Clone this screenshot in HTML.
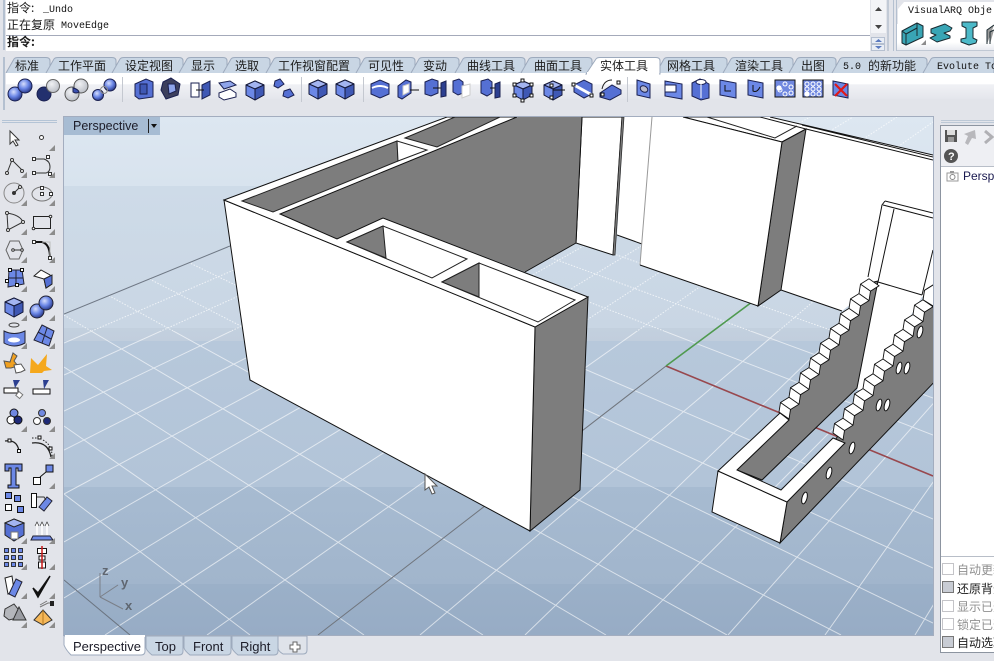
<!DOCTYPE html>
<html><head><meta charset="utf-8"><title>Rhino</title>
<style>
html,body{margin:0;padding:0;background:#e2e4ea;width:994px;height:661px;overflow:hidden}
svg{display:block}
.cj{font-family:"Liberation Mono","WenQuanYi Zen Hei","Noto Sans CJK SC",monospace;font-size:10px;fill:#111}
.cn{font-family:"WenQuanYi Zen Hei","Noto Sans CJK SC",sans-serif;font-size:12px;fill:#1c1c1c}
.ls{font-family:"Liberation Sans",sans-serif;font-size:13px;fill:#1c1c28}
</style></head><body>
<svg width="994" height="661" viewBox="0 0 994 661" xmlns="http://www.w3.org/2000/svg">
<defs>
<linearGradient id="bg" x1="0" y1="117" x2="0" y2="635" gradientUnits="userSpaceOnUse">
<stop offset="0" stop-color="#dde7f1"/><stop offset=".1333" stop-color="#d8e3ee"/>
<stop offset=".1333" stop-color="#cedbe8"/><stop offset=".4073" stop-color="#c9d6e4"/>
<stop offset=".4073" stop-color="#c3d0de"/><stop offset=".4324" stop-color="#c1cedd"/>
<stop offset=".4324" stop-color="#b7c8db"/><stop offset=".7143" stop-color="#b2c4d8"/>
<stop offset=".7143" stop-color="#a7bbd1"/><stop offset=".9015" stop-color="#a1b5cc"/>
<stop offset=".9015" stop-color="#9bb0c8"/><stop offset="1" stop-color="#97acc5"/>
</linearGradient>
<linearGradient id="tb" x1="0" y1="0" x2="0" y2="1"><stop offset="0" stop-color="#fff"/><stop offset=".42" stop-color="#fff"/><stop offset=".45" stop-color="#f0f1f5"/><stop offset="1" stop-color="#e4e6ec"/></linearGradient>
<linearGradient id="tt" x1="0" y1="0" x2="0" y2="1"><stop offset="0" stop-color="#fff"/><stop offset=".7" stop-color="#fff"/><stop offset="1" stop-color="#e8eaf0"/></linearGradient>
<radialGradient id="sp" cx=".4" cy=".35" r=".7"><stop offset="0" stop-color="#d6defc"/><stop offset=".5" stop-color="#6a86e6"/><stop offset="1" stop-color="#22307e"/></radialGradient>
<radialGradient id="sg" cx=".4" cy=".35" r=".7"><stop offset="0" stop-color="#f0f1f4"/><stop offset="1" stop-color="#b8bcc4"/></radialGradient>
<clipPath id="vp"><rect x="64" y="117" width="869" height="518"/></clipPath>
<clipPath id="gu"><polygon points="64,314 640,78 994,78 994,331 64,331"/></clipPath>
<clipPath id="gd"><rect x="64" y="331" width="869" height="304"/></clipPath>
<path id="gl" fill="none" d="M64 343L590 117M64 375L634 117M64 411L679 117M64 450L723 117M64 494L767 117M64 542L810 117M64 598L853 117M105 635L897 117M207 635L940 117M420 635L1031 117M525 635L994 181M628 635L994 267M728 635L994 335M825 635L994 396M915 635L994 505M64 494L250 635M64 426L364 635M64 367L483 635M64 315L606 635M64 271L727 635M64 235L841 635M64 202L933 623M64 172L933 568M64 145L933 519M64 99L933 435M64 79L933 398M64 61L933 366M64 44L933 335M64 29L933 307M64 15L933 282"/>
<g id="c" stroke="#15193a" stroke-width="1" stroke-linejoin="round"><polygon points="0,-9 9,-5 9,5 0,10 -9,5 -9,-5" fill="#5570d4"/><polygon points="-9,-5 0,-9 9,-5 0,-1" fill="#a3b4f0"/><polygon points="0,-1 9,-5 9,5 0,10" fill="#3f58b4"/><polygon points="0,-1 -9,-5 -9,5 0,10" fill="#6c88e6"/></g>
<polygon id="t" points="0,6 6,0 6,6" fill="#8c8c8c"/>
<g id="st">
<polygon fill="#fff" stroke="#111" stroke-width=".9" points="779,412 780.5,402.5 789,397.2 790.5,387.7 799,382.4 800.5,372.9 809,367.6 810.5,358.1 819,352.8 820.5,343.3 829,338 830.5,328.5 839,323.2 840.5,313.7 849,308.4 850.5,298.9 859,293.6 860.5,284.1 869,278.8 879,285.8 870.5,291.1 869,300.6 860.5,305.9 859,315.4 850.5,320.7 849,330.2 840.5,335.5 839,345 830.5,350.3 829,359.8 820.5,365.1 819,374.6 810.5,379.9 809,389.4 800.5,394.7 799,404.2 790.5,409.5 789,419"/>
<path fill="none" stroke="#111" stroke-width=".9" d="M780.5 402.5L790.5 409.5M789 397.2L799 404.2M790.5 387.7L800.5 394.7M799 382.4L809 389.4M800.5 372.9L810.5 379.9M809 367.6L819 374.6M810.5 358.1L820.5 365.1M819 352.8L829 359.8M820.5 343.3L830.5 350.3M829 338L839 345M830.5 328.5L840.5 335.5M839 323.2L849 330.2M840.5 313.7L850.5 320.7M849 308.4L859 315.4M850.5 298.9L860.5 305.9M859 293.6L869 300.6M860.5 284.1L870.5 291.1"/>
</g>
</defs>

<rect width="994" height="661" fill="#e2e4ea"/>

<!-- viewport -->
<rect x="63.500" y="116.500" width="870" height="519" fill="url(#bg)" stroke="#a3adbf"/>
<g clip-path="url(#vp)">
<g clip-path="url(#gu)"><use href="#gl" stroke="#fff" stroke-opacity=".7" stroke-width="1" stroke-dasharray="1.500 1.500"/></g>
<g clip-path="url(#gd)"><use href="#gl" stroke="#fff" stroke-opacity=".6" stroke-width="1"/></g>
<path d="M64 580L130 635" stroke="#6b7480" stroke-width="1"/>
<path d="M64 314L230 246" stroke="#6f7885" stroke-width="1"/>
<path d="M666 366L318 635" stroke="#70757d" stroke-width="1" fill="none"/>
<path d="M666 366L933 476" stroke="#98484e" stroke-width="1.600" fill="none"/>
<path d="M666 366L752 302" stroke="#4f9a4f" stroke-width="1.600" fill="none"/>

<!-- rear wall -->
<polygon points="757,117 770,117 940,157 940,320 922,296 878,282 842,311 781,290 806,129" fill="#fff"/>
<path d="M770 117L933 155M802 125L933 157M806 129L933 160M781 290L842 311" stroke="#111" fill="none"/>

<!-- block 1 and behind -->
<polygon points="624,117 652,117 642,244 617,235" fill="#fff"/>
<path d="M617 235L642 244" stroke="#111"/>
<polygon points="582,117 622,117 613,255 576,243" fill="#fff" stroke="#111"/>
<polygon points="622,117 624,117 615,255 613,255" fill="#7d7d7d" stroke="#222" stroke-width=".7"/>

<!-- main block -->
<polygon points="683,117 760,117 806,129 782,142" fill="#fff" stroke="#111"/>
<path d="M707 117L775 138L797 126M692 117L707 117" stroke="#222" fill="none"/>
<polygon points="782,142 806,129 781,290 758,306" fill="#7d7d7d" stroke="#111"/>
<polygon points="652,117 683,117 782,142 758,306 640,265" fill="#fff"/>
<path d="M652 117L640 265" stroke="#999"/>
<path d="M683 117L782 142L758 306L640 265" stroke="#111" fill="none"/>

<!-- front structure -->
<polygon points="280,214 518,117 582,117 576,243 525,272 383,218 337,239" fill="#7d7d7d"/>
<path d="M582 117L576 243L525 272" stroke="#111" fill="none"/>
<polygon points="535,327 588,297 580,490 530,531" fill="#7d7d7d" stroke="#111"/>
<polygon points="224,200 535,327 530,531 250,380" fill="#fff" stroke="#111"/>
<polygon points="224,200 447,117 517,117 280,214 337,239 383,218 588,297 535,327" fill="#fff" stroke="#111"/>
<polygon points="242,201 397,141 398,161 273,212" fill="#7d7d7d" stroke="#222"/>
<polygon points="397,141 427,150 398,161" fill="#fff" stroke="#222"/>
<polygon points="405,138 455,117 500,117 437,147" fill="#7d7d7d" stroke="#222"/>
<polygon points="347,242 383,226 467,259 432,278" fill="#fff" stroke="#222"/>
<polygon points="347,242 383,226 386,258" fill="#7d7d7d" stroke="#222"/>
<polygon points="442,282 479,263 575,300 538,322" fill="#fff" stroke="#222"/>
<polygon points="442,282 479,263 479,297" fill="#7d7d7d" stroke="#222"/>

<!-- tall panel behind stairs -->
<polygon points="878,281 923,295 866,390 857,390" fill="#fff"/>
<path d="M885 201L933 213M883 205L933 218M885 201L882 205L868 277M894 209L878 282L922 295M933 250L922 295" stroke="#111" fill="none"/>

<!-- stairs -->
<polygon points="737,470 762,480 857,388 878,281 874,282 785,416" fill="#7d7d7d" stroke="#111"/>
<polygon points="787,502 780,543 940,376 940,290 838,436" fill="#7d7d7d" stroke="#111"/>
<polygon points="718,471 787,502 780,543 712,512" fill="#fff" stroke="#111"/>
<polygon points="718,471 780,413 789,420 737,470 781,490 833,438 845,443 787,502" fill="#fff" stroke="#111"/>
<use href="#st"/>
<use href="#st" transform="translate(54,21)"/>
<polygon points="923,299.800 924.500,290.300 933,285 943,292 933,306" fill="#fff" stroke="#111"/>
<g fill="#fff" stroke="#111">
<ellipse cx="804.500" cy="498" rx="2.500" ry="6" transform="rotate(15 804.500 498)"/>
<ellipse cx="829" cy="473" rx="2.500" ry="6" transform="rotate(15 829 473)"/>
<ellipse cx="852" cy="448" rx="2.500" ry="6" transform="rotate(15 852 448)"/>
<ellipse cx="879" cy="405" rx="2.500" ry="6" transform="rotate(15 879 405)"/>
<ellipse cx="887" cy="405" rx="2.500" ry="6" transform="rotate(15 887 405)"/>
<ellipse cx="899" cy="368" rx="2.500" ry="6" transform="rotate(15 899 368)"/>
<ellipse cx="907" cy="368" rx="2.500" ry="6" transform="rotate(15 907 368)"/>
<ellipse cx="920" cy="332" rx="2.500" ry="6" transform="rotate(15 920 332)"/>
</g>

<!-- cursor -->
<polygon points="425,474 425,490 429,487 432,494 435,493 432,486 437,486" fill="#fff" stroke="#555" stroke-width="1"/>

<!-- world axes -->
<path d="M100 597V573M100 597L118 585M100 597L123 609" stroke="#7a7f88" fill="none"/>
<g font-family="Liberation Sans,sans-serif" font-size="13" font-weight="bold" fill="#5f6670"><text x="102" y="575">z</text><text x="121" y="587">y</text><text x="125" y="610">x</text></g>

<!-- viewport title -->
<rect x="64" y="117" width="96" height="18" fill="#a7bcd3"/>
<text x="73" y="130" class="ls" style="font-size:12.500px">Perspective</text>
<path d="M148.500 119V133" stroke="#222"/><polygon points="151,124 157,124 154,128" fill="#111"/>
</g>

<!-- TOP -->
<rect x="0" y="0" width="994" height="56" fill="#e2e4ea"/>
<rect x="6" y="0" width="864" height="51" fill="#fff"/>
<path d="M6 35.500H870" stroke="#a4aaba"/>
<rect x="3" y="0" width="2" height="50" fill="#b4c0d0"/>
<rect x="3" y="57" width="2" height="53" fill="#b4c0d0"/>
<text x="7" y="12" class="cn">指令:</text><text x="43" y="12" class="cj">_Undo</text>
<text x="7" y="29" class="cn">正在复原</text><text x="61" y="28" class="cj">MoveEdge</text>
<text x="7" y="46" class="cn" style="font-weight:bold">指令:</text>

<!-- scrollbar -->
<rect x="871" y="0" width="15" height="33" fill="#f3f4f7"/>
<polygon points="875,11 882,11 878.500,7" fill="#444"/><polygon points="875,25 882,25 878.500,29" fill="#444"/>
<rect x="871.500" y="37.500" width="13" height="6" fill="#e8edf5" stroke="#b6c0d0"/><rect x="871.500" y="44.500" width="13" height="6" fill="#e8edf5" stroke="#b6c0d0"/>
<polygon points="875,42 882,42 878.500,39" fill="#5a7ac0"/><polygon points="875,46 882,46 878.500,49" fill="#5a7ac0"/>
<rect x="887" y="0" width="2" height="51" fill="#c2cad6"/><rect x="893" y="0" width="1" height="51" fill="#b4c0d0"/><rect x="896" y="0" width="1" height="51" fill="#b4c0d0"/>

<!-- VisualARQ panel -->
<path d="M898 24V9L904 2H994V24Z" fill="#fff"/>
<rect x="897" y="24" width="97" height="26" fill="url(#tt)"/>
<path d="M897 50.500H994" stroke="#c0c8d4"/>
<text x="908" y="13" class="cj" style="font-size:10px">VisualARQ Obje</text>
<g stroke="#1a2a30" stroke-linejoin="round">
<polygon points="902,31 917,23 923,26 923,37 906,45 902,43" fill="#39a5b5"/>
<path d="M917 23V36M906 34V45M902 31L906 34L917 28" fill="none"/>
<polygon points="931,29 945,24 952,28 950,31 944,33 950,36 950,38 937,42 930,38 936,35 931,33" fill="#39a5b5"/>
<polygon points="962,22 977,22 977,26 973,28 973,38 977,40 976,43 969,45 961,42 961,39 966,38 966,28 962,26" fill="#4cb9c8"/>
<path d="M987 44V30L994 25M990 44V32L994 30" fill="#9c9c9c"/>
</g>
<polygon points="921,45 926,40 926,45" fill="#8c8c8c"/>

<!-- tab strip -->
<g stroke="#9daabd" fill="#c9d6e4">
<path d="M6 73L14 59Q15 57.500 18 57.500H46Q50 57.500 50 61V73"/>
<path d="M46 73L54 59Q55 57.500 58 57.500H112Q116 57.500 116 61V73"/>
<path d="M112 73L120 59Q121 57.500 124 57.500H179Q183 57.500 183 61V73"/>
<path d="M179 73L187 59Q188 57.500 191 57.500H223Q227 57.500 227 61V73"/>
<path d="M223 73L231 59Q232 57.500 235 57.500H266Q270 57.500 270 61V73"/>
<path d="M266 73L274 59Q275 57.500 278 57.500H356Q360 57.500 360 61V73"/>
<path d="M356 73L364 59Q365 57.500 368 57.500H411Q415 57.500 415 61V73"/>
<path d="M411 73L419 59Q420 57.500 423 57.500H455Q459 57.500 459 61V73"/>
<path d="M455 73L463 59Q464 57.500 467 57.500H521Q525 57.500 525 61V73"/>
<path d="M521 73L529 59Q530 57.500 533 57.500H588Q592 57.500 592 61V73"/>
<path d="M656 73L664 59Q665 57.500 668 57.500H723Q727 57.500 727 61V73"/>
<path d="M723 73L731 59Q732 57.500 735 57.500H789Q793 57.500 793 61V73"/>
<path d="M789 73L797 59Q798 57.500 801 57.500H832Q836 57.500 836 61V73"/>
<path d="M832 73L840 59Q841 57.500 844 57.500H923Q927 57.500 927 61V73"/>
<path d="M923 73L931 59Q932 57.500 935 57.500H994V73"/>
</g>
<rect x="6" y="73" width="988" height="26" fill="url(#tb)"/>
<path d="M586 74L596 59Q597 57.500 600 57.500H656Q660 57.500 660 61V74Z" fill="#fff" stroke="#9daabd"/>
<rect x="587" y="72" width="72" height="4" fill="#fff"/>
<text x="15" y="70" class="cn">标准</text><text x="58" y="70" class="cn">工作平面</text><text x="125" y="70" class="cn">设定视图</text><text x="191" y="70" class="cn">显示</text><text x="235" y="70" class="cn">选取</text><text x="278" y="70" class="cn">工作视窗配置</text><text x="368" y="70" class="cn">可见性</text><text x="423" y="70" class="cn">变动</text><text x="467" y="70" class="cn">曲线工具</text><text x="534" y="70" class="cn">曲面工具</text><text x="600" y="70" class="cn">实体工具</text><text x="667" y="70" class="cn">网格工具</text><text x="735" y="70" class="cn">渲染工具</text><text x="801" y="70" class="cn">出图</text>
<text x="843" y="69" class="cj">5.0</text><text x="868" y="70" class="cn">的新功能</text>
<text x="937" y="69" class="cj">Evolute Tool</text>

<!-- separators -->
<path d="M122.500 77V102M301.500 77V102M363.500 77V102M627.500 77V102" stroke="#c4c8d0"/>

<!-- main toolbar icons -->
<g stroke="#1a2050" stroke-width="1">
<circle cx="15" cy="94" r="7" fill="url(#sp)"/><circle cx="25" cy="86" r="7" fill="url(#sp)"/>
<circle cx="44" cy="94" r="7" fill="#23306e"/><circle cx="53" cy="86" r="6.500" fill="url(#sg)" stroke="#666"/>
<circle cx="72" cy="94" r="7" fill="url(#sg)" stroke="#555"/><circle cx="81" cy="86" r="7" fill="url(#sg)" stroke="#555"/><path d="M73 88Q78 89 79 92Q76 94 73 92Z" fill="#3a50b0"/>
<circle cx="98" cy="95" r="5.500" fill="url(#sp)"/><circle cx="110" cy="85" r="6" fill="url(#sp)"/><circle cx="104" cy="90" r="3.500" fill="none" stroke="#888"/>
<polygon points="135,84 146,79 153,82 153,97 139,99 135,96" fill="#5570d4"/><rect x="140" y="84" width="7" height="10" fill="#3f58b4"/>
<polygon points="171,78 180,84 178,95 166,99 161,90 163,82" fill="#3c3f5c"/><polygon points="168,84 175,84 176,91 169,94" fill="#8ea4ea"/>
<rect x="191" y="83" width="8" height="14" fill="#fff"/><polygon points="202,85 210,81 210,95 202,99" fill="#3f58b4"/><path d="M196 90H204" stroke="#111"/>
<polygon points="219,83 230,81 236,85 224,89" fill="#8ea4ea"/><polygon points="219,93 230,89 236,93 236,97 224,100 219,97" fill="#fff"/>
</g>
<use href="#c" transform="translate(255,90)"/>
<g fill="#5570d4" stroke="#1a2050"><polygon points="275,81 280,79 284,84 278,88 274,86"/><polygon points="284,91 290,89 294,95 288,98 283,96"/></g>
<use href="#c" transform="translate(318,89)"/><use href="#c" transform="translate(345,89)"/>
<g stroke="#1a2050">
<polygon points="371,84 380,80 389,84 389,94 380,98 371,94" fill="#5570d4"/><path d="M372 88Q380 84 388 88" stroke="#fff" stroke-width="2" fill="none"/>
<polygon points="398,86 406,80 411,82 411,93 402,99 398,97" fill="#5570d4"/><polygon points="403,86 409,84 409,92 403,95" fill="#fff" stroke="#ccc"/><path d="M410 90H419" stroke="#111"/>
<polygon points="425,82 432,79 438,81 438,93 431,96 425,94" fill="#5570d4"/><path d="M433 88H441" stroke="#111"/><polygon points="441,83 446,81 446,96 441,97" fill="#2c3f90"/>
<polygon points="453,81 459,79 463,82 463,93 458,95 453,92" fill="#5570d4"/><polygon points="462,86 470,84 470,95 462,98" fill="#fff" stroke="#ccc"/>
<polygon points="481,81 488,79 492,82 492,93 487,96 481,93" fill="#5570d4"/><path d="M490 88H498" stroke="#111"/><polygon points="495,84 500,82 500,97 495,98" fill="#2c3f90"/>
</g>
<g transform="translate(523,90)"><use href="#c"/><g fill="#fff" stroke="#111"><rect x="-10" y="-7" width="3" height="3"/><rect x="-2" y="-11" width="3" height="3"/><rect x="7" y="-7" width="3" height="3"/><rect x="7" y="4" width="3" height="3"/><rect x="-2" y="9" width="3" height="3"/><rect x="-10" y="4" width="3" height="3"/></g></g>
<g transform="translate(553,90)"><use href="#c"/><g fill="#fff" stroke="#111"><rect x="-3" y="-6" width="3" height="3"/><rect x="-3" y="6" width="3" height="3"/></g><path d="M0 0H12" stroke="#111"/></g>
<g stroke="#1a2050"><polygon points="574,85 584,80 592,84 592,94 584,98 574,92" fill="#5570d4"/><path d="M574 85L592 95" stroke="#fff" stroke-width="3"/></g>
<g fill="#fff" stroke="#111"><rect x="572" y="83" width="3" height="3"/><rect x="590" y="94" width="3" height="3"/></g>
<g stroke="#1a2050"><polygon points="600,93 612,85 621,90 621,94 610,100 600,97" fill="#5570d4"/><path d="M602 89Q604 80 612 80" fill="none" stroke="#222"/></g>
<g fill="#fff" stroke="#111"><rect x="601" y="93" width="3" height="3"/><rect x="617" y="81" width="3" height="3"/></g>
<g stroke="#1a2050">
<polygon points="637,80 650,84 650,98 637,95" fill="#6c88e6"/><ellipse cx="644" cy="89" rx="4" ry="3" fill="#bbc" transform="rotate(30 644 89)"/>
<polygon points="665,81 682,84 682,99 665,96" fill="#6c88e6"/><rect x="665" y="85" width="11" height="7" fill="#fff"/>
<polygon points="692,83 700,79 709,84 709,98 701,100 692,96" fill="#5570d4"/><ellipse cx="701" cy="82" rx="5" ry="2.500" fill="#fff"/><path d="M701 84V98" stroke="#fff"/>
<polygon points="720,80 736,83 736,98 720,95" fill="#6c88e6"/><path d="M725 85V91H731" stroke="#111" fill="none"/>
<polygon points="748,80 763,83 763,98 748,95" fill="#6c88e6"/><path d="M753 85V91Q757 93 760 87" stroke="#111" fill="none"/>
</g>
<g stroke="#111"><rect x="775" y="80" width="20" height="17" fill="#7088e0"/><rect x="803" y="80" width="20" height="17" fill="#7088e0"/></g>
<g fill="#7088e0" stroke="#fff"><circle cx="780" cy="90" r="2"/><circle cx="785" cy="84" r="2"/><circle cx="791" cy="87" r="2"/><circle cx="791" cy="93" r="2"/><circle cx="785" cy="94" r="2"/></g>
<circle cx="779" cy="88" r="2.600" fill="#fff"/>
<g fill="#7088e0" stroke="#fff"><circle cx="807" cy="84" r="2"/><circle cx="813" cy="84" r="2"/><circle cx="819" cy="84" r="2"/><circle cx="807" cy="89" r="2"/><circle cx="813" cy="89" r="2"/><circle cx="819" cy="89" r="2"/><circle cx="813" cy="94" r="2"/><circle cx="819" cy="94" r="2"/></g>
<circle cx="807" cy="94" r="2.600" fill="#fff"/>
<polygon points="833,81 848,84 848,98 833,95" fill="#6c88e6" stroke="#1a2050"/>
<path d="M835 84L847 96M847 84L835 96" stroke="#e01818" stroke-width="2.200"/>

<!-- left toolbar -->
<path d="M2 120.500H57M2 122.500H57" stroke="#b4c4d6"/>
<g fill="none" stroke="#333" stroke-width="1">
<polygon points="10,131 10,144 13,141 16,146 18,145 15,140 19,140" fill="#fff"/>
<circle cx="41.500" cy="137.500" r="2" fill="#fff"/>
<path d="M7 173L12 160L22 170"/><circle cx="7" cy="173" r="1.500" fill="#fff"/><circle cx="12" cy="160" r="1.500" fill="#fff"/><circle cx="22" cy="171" r="1.500" fill="#fff"/>
<path d="M35 159H44Q50 161 50 167Q50 172 46 173H35"/><rect x="32.500" y="157.500" width="3" height="3" fill="#fff"/><rect x="46.500" y="155.500" width="3" height="3" fill="#fff"/><rect x="32.500" y="171.500" width="3" height="3" fill="#fff"/><rect x="48.500" y="172.500" width="3" height="3" fill="#fff"/>
<circle cx="14" cy="193" r="10" stroke="#888"/><path d="M14 193L20 187"/><circle cx="14" cy="193" r="1.500" fill="#333"/><circle cx="20" cy="187" r="1.500" fill="#fff"/>
<ellipse cx="42" cy="194" rx="10" ry="7" stroke="#777"/><rect x="40.500" y="186.500" width="3" height="3" fill="#fff"/><rect x="40.500" y="192.500" width="3" height="3" fill="#fff"/><rect x="49.500" y="192.500" width="3" height="3" fill="#fff"/>
<path d="M7 213L8 230L23 222Q20 215 7 213"/><circle cx="7" cy="213" r="1.500" fill="#fff"/><circle cx="8" cy="230" r="1.500" fill="#fff"/><circle cx="23" cy="222" r="1.500" fill="#fff"/>
<rect x="33.500" y="216.500" width="17" height="12" stroke="#222"/><circle cx="33.500" cy="228.500" r="1.300" fill="#fff"/><circle cx="50.500" cy="216.500" r="1.300" fill="#fff"/>
<polygon points="10,241 19,241 23,250 19,259 10,259 6,250" stroke="#666"/><path d="M13 250H22"/><circle cx="13" cy="250" r="1.300" fill="#fff"/><circle cx="22" cy="250" r="1.300" fill="#fff"/>
<path d="M34 242H42Q50 244 50 258" stroke="#111" stroke-width="2"/><path d="M42 242H50V256" stroke="#bbb"/><rect x="32.500" y="240.500" width="3" height="3" fill="#fff"/><rect x="48.500" y="256.500" width="3" height="3" fill="#fff"/>
</g>
<polygon points="9,270 22,270 24,284 8,287" fill="#6c88e6" stroke="#223"/>
<path d="M16 270V286M8 278H23" stroke="#223"/>
<g fill="#fff" stroke="#111"><rect x="8.500" y="268.500" width="3" height="3"/><rect x="20.500" y="268.500" width="3" height="3"/><rect x="5.500" y="279.500" width="3" height="3"/><rect x="15.500" y="283.500" width="3" height="3"/></g>
<path d="M34 276L41 270L50 275L52 284L46 288L44 279Z" fill="#fff" stroke="#222"/><path d="M44 279L52 275L52 284L46 288Z" fill="#5570d4" stroke="#222"/>
<use href="#c" transform="translate(14,307)"/>
<circle cx="37" cy="311" r="7" fill="url(#sp)" stroke="#223"/><circle cx="46" cy="303" r="7" fill="url(#sp)" stroke="#223"/>
<ellipse cx="14" cy="325" rx="5" ry="2" fill="none" stroke="#444"/>
<path d="M4 331Q14 336 25 331V343Q14 349 4 343Z" fill="#6c88e6" stroke="#223"/><ellipse cx="14" cy="340" rx="6" ry="2.500" fill="#fff" stroke="none"/>
<polygon points="42,325 54,331 49,346 34,340" fill="#6c88e6" stroke="#223"/><path d="M38 332L51 339M47 328L42 343" stroke="#223"/>
<polygon points="4,361 10,362 13,353 17,356 14,361 18,366 11,368 6,368" fill="#f0a020" stroke="#555"/>
<polygon points="14,365 21,364 25,370 21,372 16,373" fill="#fff" stroke="#555"/>
<polygon points="30,373 31,358 38,365 47,354 46,366 52,370 44,371 42,373" fill="#f5a81c"/>
<g><rect x="4" y="388" width="14" height="5" fill="#fff" stroke="#111"/><polygon points="13,380 20,380 15,388" fill="#2c3f90"/><rect x="17" y="393" width="5" height="5" fill="#fff" stroke="#777" transform="rotate(40 20 395)"/><rect x="33" y="389" width="17" height="5" fill="#fff" stroke="#111"/><polygon points="43,380 49,380 44,389" fill="#2c3f90"/></g>
<g stroke="#111"><circle cx="14" cy="413" r="4" fill="#7088e0"/><circle cx="11" cy="420" r="4" fill="#fff"/><circle cx="18" cy="420" r="4" fill="#1e2a78"/></g>
<g stroke="#333"><circle cx="42" cy="413" r="3.500" fill="#7088e0"/><circle cx="37" cy="421" r="3.500" fill="#fff"/><circle cx="47" cy="421" r="3.500" fill="#1e2a78"/></g>
<path d="M5 441Q17 439 19 451" fill="none" stroke="#222" stroke-width="1.300"/><rect x="8" y="439" width="3" height="3" fill="#fff" stroke="#111"/><rect x="17.500" y="449.500" width="3" height="3" fill="#fff" stroke="#111"/>
<path d="M32 443Q48 441 51 457" fill="none" stroke="#222" stroke-width="1.300"/><path d="M32 438H40M43 440Q52 445 52 456" stroke="#222" stroke-dasharray="1.500 1.500" fill="none"/><rect x="38" y="436" width="3" height="3" fill="#fff" stroke="#111"/><rect x="49" y="447" width="3" height="3" fill="#fff" stroke="#111"/>
<path d="M5 464H22V471H18V468H16V485H19V488H8V485H11V468H9V471H5Z" fill="#6c88e6" stroke="#111"/>
<rect x="33.500" y="477.500" width="7" height="7" fill="#fff" stroke="#111"/><rect x="46" y="465" width="7" height="7" fill="#6c88e6" stroke="#111"/><path d="M40 477L46 472" stroke="#111"/>
<g stroke="#111"><rect x="5.500" y="492.500" width="6" height="6" fill="#6c88e6"/><rect x="14.500" y="495.500" width="6" height="6" fill="#6c88e6"/><rect x="5.500" y="504.500" width="6" height="6" fill="#fff"/><rect x="17.500" y="506.500" width="6" height="6" fill="#6c88e6"/></g>
<rect x="31.500" y="493.500" width="5" height="14" fill="#fff" stroke="#111"/><polygon points="47,497 52,501 44,511 39,507" fill="#6c88e6" stroke="#223"/><path d="M37 497H44L46 500" fill="none" stroke="#333"/>
<polygon points="14,519 24,523 24,535 14,541 5,535 5,523" fill="#5570d4" stroke="#222"/><polygon points="5,523 14,519 24,523 14,527" fill="#a3b4f0" stroke="#222"/><rect x="11" y="532" width="7" height="7" fill="#fff" stroke="#777"/>
<polygon points="33,536 50,536 53,540 31,540" fill="#6c88e6" stroke="#223"/><path d="M37 535V524M42 535V524M47 535V524" stroke="#fff" stroke-width="1.500"/><path d="M35 526L37 522L39 526M40 526L42 522L44 526M45 526L47 522L49 526" fill="#fff" stroke="#333" stroke-width=".7"/>
<g fill="#6c88e6" stroke="#111" stroke-width=".8"><rect x="4.500" y="548.500" width="4" height="4"/><rect x="11.500" y="548.500" width="4" height="4"/><rect x="18.500" y="548.500" width="4" height="4"/><rect x="4.500" y="555.500" width="4" height="4"/><rect x="11.500" y="555.500" width="4" height="4"/><rect x="18.500" y="555.500" width="4" height="4"/><rect x="4.500" y="562.500" width="4" height="4"/><rect x="11.500" y="562.500" width="4" height="4"/><rect x="18.500" y="562.500" width="4" height="4"/></g>
<g fill="#fff" stroke="#111"><rect x="37.500" y="548.500" width="9" height="5"/><rect x="39" y="556" width="6" height="4"/><rect x="38.500" y="562" width="7" height="6"/></g><path d="M42 546V569" stroke="#c81818" stroke-width="1.500"/>
<polygon points="5,578 12,576 14,590 8,594" fill="#fff" stroke="#222"/><polygon points="16,579 22,582 15,597 9,594" fill="#6c88e6" stroke="#223"/>
<path d="M33 588L38 593L50 576L38 597Z" fill="#111" stroke="#111" stroke-width="1.500"/>
<polygon points="5,609 14,604 18,609 17,618 9,620 4,616" fill="#b4b6bb" stroke="#333"/><polygon points="19,607 26,620 13,620" fill="#9a9ca2" stroke="#333"/>
<polygon points="43,610 52,620 43,625 34,620" fill="#f5b85a" stroke="#333"/><path d="M43 610V625" stroke="#b87a20"/>
<path d="M40 607L48 603H54M40 605L47 601" fill="none" stroke="#777"/><rect x="50" y="601" width="4" height="5" fill="#222"/>
<use href="#t" x="49" y="145"/><use href="#t" x="21" y="172"/><use href="#t" x="49" y="172"/><use href="#t" x="21" y="200"/><use href="#t" x="49" y="200"/><use href="#t" x="21" y="229"/><use href="#t" x="49" y="229"/><use href="#t" x="21" y="257"/><use href="#t" x="49" y="257"/><use href="#t" x="21" y="286"/><use href="#t" x="49" y="286"/><use href="#t" x="21" y="315"/><use href="#t" x="49" y="315"/><use href="#t" x="21" y="343"/><use href="#t" x="49" y="343"/>
<use href="#t" x="21" y="426"/><use href="#t" x="49" y="426"/><use href="#t" x="49" y="453"/><use href="#t" x="49" y="483"/><use href="#t" x="21" y="538"/><use href="#t" x="49" y="538"/><use href="#t" x="21" y="564"/><use href="#t" x="49" y="564"/><use href="#t" x="21" y="593"/><use href="#t" x="49" y="593"/><use href="#t" x="21" y="622"/><use href="#t" x="49" y="622"/>

<!-- bottom tabs -->
<g stroke="#9daabd" fill="#c9d6e4">
<path d="M278 636V648Q278 651 283 654H303Q307 654 307 650V636Z" fill="#dfe3ea"/>
<path d="M232 636V648Q233 651 238 655H274Q278 655 278 651V636Z"/>
<path d="M184 636V648Q185 651 190 655H227Q231 655 231 651V636Z"/>
<path d="M146 636V648Q147 651 152 655H179Q183 655 183 651V636Z"/>
<path d="M64 636V645Q66 650 71 655H141Q145 655 145 651V636Z" fill="#fff"/>
</g>
<rect x="65" y="635" width="80" height="2" fill="#fff"/>
<text x="73" y="651" class="ls">Perspective</text><text x="155" y="651" class="ls">Top</text><text x="193" y="651" class="ls">Front</text><text x="240" y="651" class="ls">Right</text>
<path d="M293 642H297V645H300V649H297V652H293V649H290V645H293Z" fill="#fff" stroke="#666"/>

<!-- right panel -->
<path d="M941 120.500H994M941 122.500H994" stroke="#bcc8d6"/>
<rect x="940.500" y="125.500" width="54" height="527" fill="#fff" stroke="#8c94a0"/>
<rect x="941" y="126" width="53" height="40" fill="#eeeff3"/>
<path d="M941 166.500H994" stroke="#b8bec8"/>
<rect x="945" y="130" width="12" height="12" fill="#555"/><rect x="947" y="130" width="8" height="5" fill="#ddd"/><rect x="948" y="137" width="6" height="5" fill="#999"/>
<polygon points="965,143 968,136 964,134 975,130 976,139 972,138 968,145" fill="#b8b8bc"/>
<path d="M985 131L992 137L985 143" fill="none" stroke="#b0b0b4" stroke-width="3"/>
<circle cx="951" cy="156" r="7" fill="#555"/>
<text x="948" y="160" font-family="Liberation Sans,sans-serif" font-size="11" font-weight="bold" fill="#fff">?</text>
<rect x="947" y="173" width="11" height="8" fill="#fff" stroke="#999"/><rect x="950" y="171" width="4" height="2" fill="#999"/><circle cx="952.500" cy="177" r="2.500" fill="none" stroke="#888"/>
<text x="963" y="180" class="ls" style="font-size:12px;fill:#1a1a50">Perspective</text>
<path d="M941 556.500H994" stroke="#b8bec8"/>
<g stroke="#c4c4c8" fill="#fff">
<rect x="942.500" y="563.500" width="11" height="11"/><rect x="942.500" y="600.500" width="11" height="11"/><rect x="942.500" y="618.500" width="11" height="11"/>
</g>
<g stroke="#777" fill="#c8ccd4"><rect x="942.500" y="581.500" width="11" height="11"/><rect x="942.500" y="636.500" width="11" height="11"/></g>
<text x="957" y="574" class="cn" style="fill:#909090">自动更新</text>
<text x="957" y="593" class="cn">还原背景</text>
<text x="957" y="611" class="cn" style="fill:#909090">显示已选</text>
<text x="957" y="629" class="cn" style="fill:#909090">锁定已选</text>
<text x="957" y="647" class="cn">自动选取</text>
</svg>
</body></html>
